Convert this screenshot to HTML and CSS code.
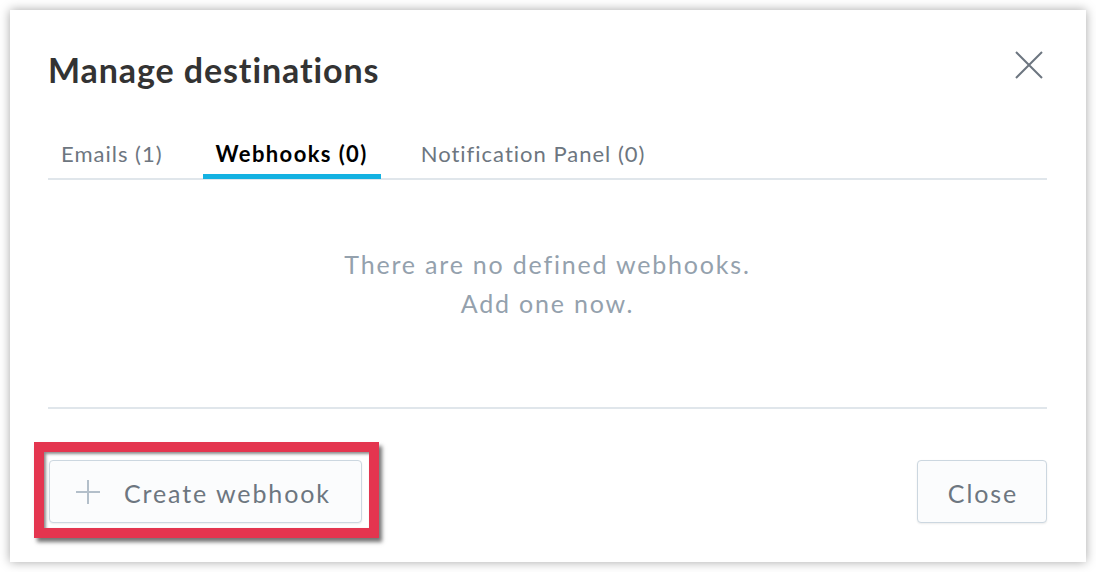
FILE: index.html
```html
<!DOCTYPE html>
<html lang="en">
<head>
<meta charset="utf-8">
<title>Manage destinations</title>
<link rel="stylesheet" href="styles.css">
</head>
<body>
<div class="dialog">
  <div class="dialog-header">
    <h1 class="dialog-title">Manage destinations</h1>
    <button class="close-x" aria-label="Close">
      <svg width="28" height="28" viewBox="0 0 28 28"><path d="M1 1 L27 27 M27 1 L1 27" stroke="#6d7680" stroke-width="2" fill="none"/></svg>
    </button>
  </div>
  <div class="tabs">
    <div class="tab">Emails (1)</div>
    <div class="tab tab-active">Webhooks (0)</div>
    <div class="tab">Notification Panel (0)</div>
  </div>
  <div class="dialog-body">
    <p class="empty">There are no defined webhooks.<br>Add one now.</p>
  </div>
  <div class="dialog-footer">
    <button class="btn btn-create">
      <svg class="plus" width="26" height="26" viewBox="0 0 26 26"><path d="M13 1 V25 M1 13 H25" stroke="#b3bfca" stroke-width="2" fill="none"/></svg>
      <span>Create webhook</span>
    </button>
    <button class="btn btn-close">Close</button>
  </div>
  <div class="highlight"></div>
</div>
</body>
</html>
```

FILE: styles.css
```css
* { box-sizing: border-box; }
html, body { margin: 0; padding: 0; background: #ffffff; }
body {
  font-family: Lato, "Open Sans", "Liberation Sans", sans-serif;
  width: 1096px;
  height: 572px;
  overflow: hidden;
}
.dialog {
  position: relative;
  margin: 10px;
  width: 1076px;
  height: 552px;
  background: #fff;
  box-shadow: 0 0 10px rgba(0, 0, 0, 0.35);
  padding: 40px 39px 39px 38px;
  display: flex;
  flex-direction: column;
}
.dialog-header {
  display: flex;
  justify-content: space-between;
  align-items: flex-start;
}
.dialog-title {
  margin: 0;
  font-size: 34px;
  line-height: 40px;
  font-weight: 700;
  color: #333333;
  letter-spacing: 0.9px;
}
.close-x {
  border: 0;
  background: none;
  padding: 0;
  margin: 1px 4px 0 0;
  width: 28px;
  height: 28px;
  display: block;
}
.close-x svg { display: block; }
.tabs {
  margin-top: 49px;
  display: flex;
  gap: 27px;
  border-bottom: 2px solid #e0e6eb;
}
.tab {
  position: relative;
  padding: 0 13px 9px;
  font-size: 22px;
  line-height: 30px;
  color: #6d7680;
  letter-spacing: 1px;
}
.tab-active {
  color: #000;
  font-weight: 700;
  letter-spacing: 1.4px;
}
.tab-active::after {
  content: "";
  position: absolute;
  left: 0;
  right: 0;
  bottom: -1px;
  height: 5px;
  background: #14b2e2;
}
.dialog-body {
  height: 230px;
  border-bottom: 2px solid #e0e6eb;
  display: flex;
  justify-content: center;
  padding-top: 65px;
}
.empty {
  margin: 0;
  text-align: center;
  font-size: 25px;
  line-height: 39px;
  color: #94a1ad;
  letter-spacing: 1.8px;
}
.dialog-footer {
  margin-top: 51px;
  display: flex;
  justify-content: space-between;
  padding-left: 1px;
}
.btn {
  font-family: inherit;
  font-size: 25px;
  color: #6d7680;
  background: #fbfcfd;
  border: 1px solid #ccd7e0;
  border-radius: 4px;
  height: 63px;
  display: flex;
  align-items: center;
  box-shadow: 0 1px 2px rgba(0, 0, 0, 0.08);
  letter-spacing: 1.9px;
}
.btn span { position: relative; top: 1px; }
.btn-create {
  width: 313px;
  padding: 0 0 0 25px;
  gap: 23px;
}
.plus { display: block; flex: none; }
.btn-close {
  width: 130px;
  justify-content: center;
  padding: 2px 0 0 2px;
}
.highlight {
  position: absolute;
  left: 24px;
  top: 432px;
  width: 345px;
  height: 96px;
  border: 10px solid #e4354f;
  box-shadow: 3px 4px 4px rgba(0, 0, 0, 0.55), inset 2px 2px 3px rgba(0, 0, 0, 0.45);
  pointer-events: none;
}
```
